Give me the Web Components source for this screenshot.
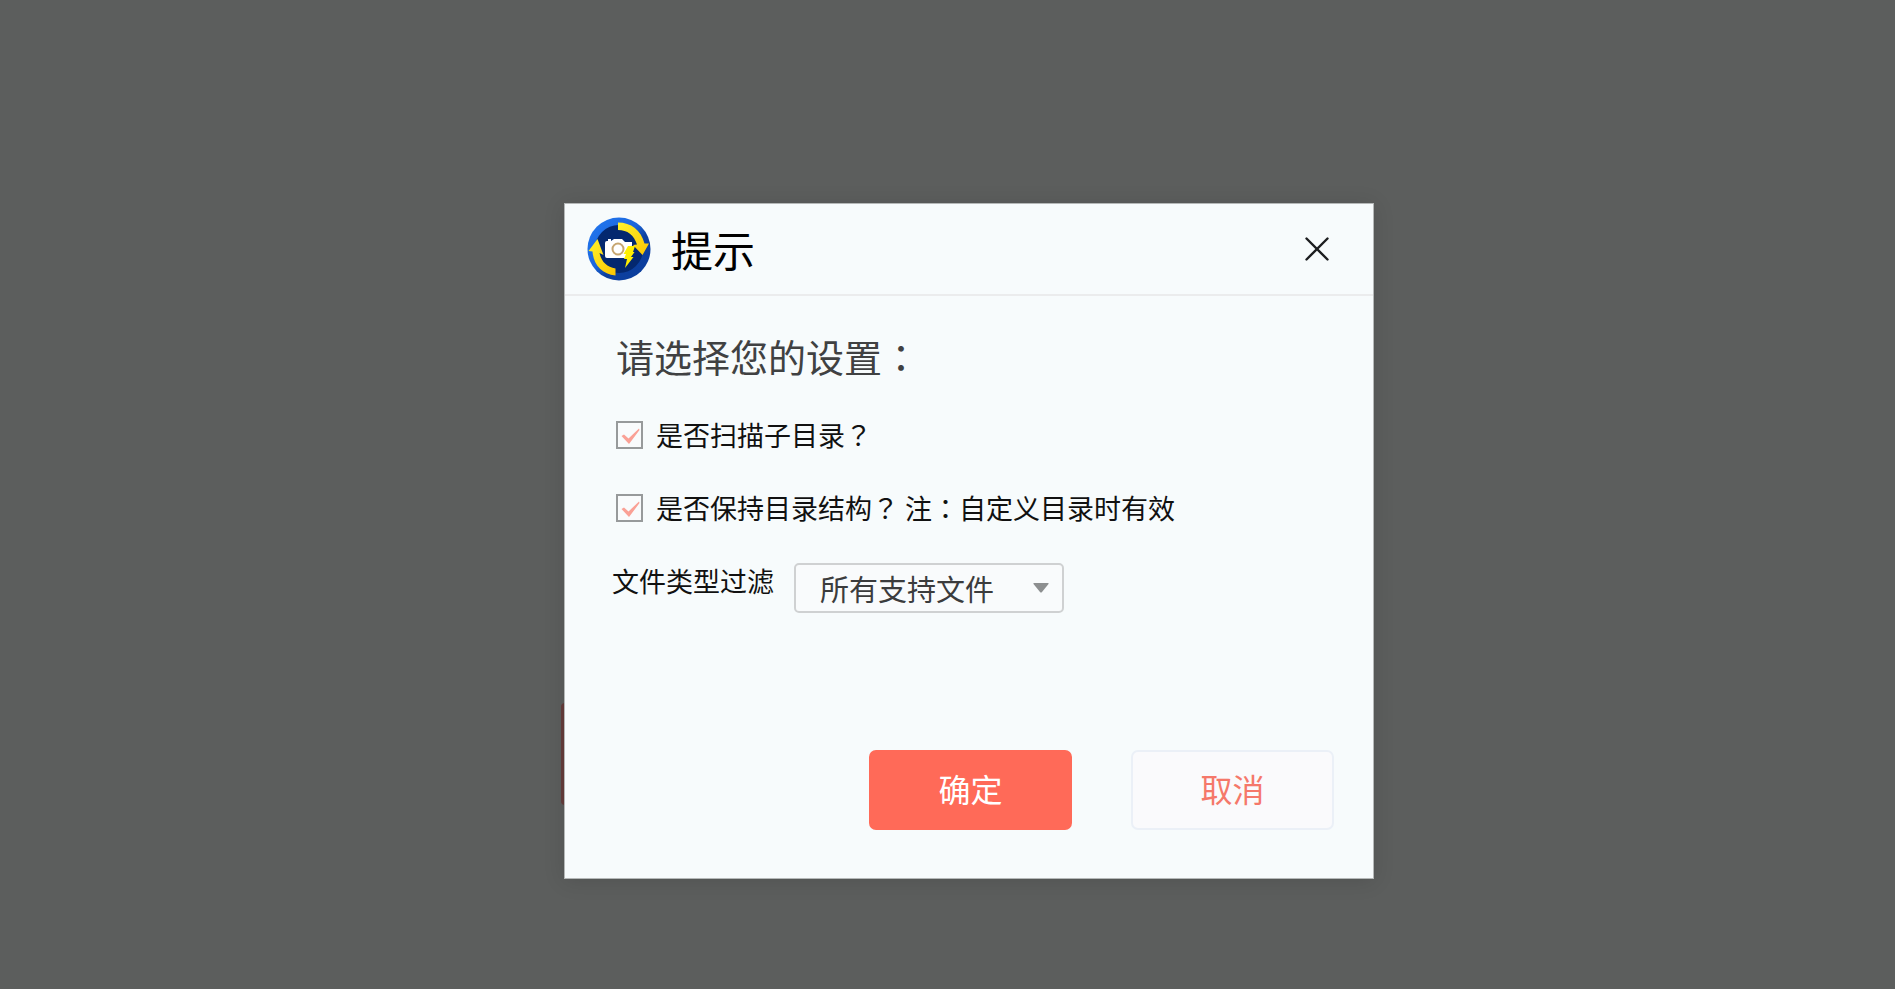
<!DOCTYPE html>
<html lang="zh-CN">
<head>
<meta charset="utf-8">
<title>提示</title>
<style>
  body {
    margin: 0;
    background: #5c5e5d;
    font-family: "Noto Sans CJK SC", sans-serif;
  }
</style>
</head>
<body>

<prompt-backdrop>
  <prompt-dialog>
    <app-logo slot="logo"></app-logo>
    <span slot="title">提示</span>
    <settings-form></settings-form>
  </prompt-dialog>
</prompt-backdrop>

<template id="prompt-backdrop">
  <style>
    :host {
      display: flex;
      justify-content: center;
      align-items: flex-start;
      box-sizing: border-box;
      min-height: 100vh;
      padding: 203px 0 40px 43px;
    }
    .stage {
      position: relative;
      width: 43%;
      min-width: 810px;
    }
    /* Edge of the button that the dialog covers. */
    .covered {
      position: absolute;
      left: -3px;
      bottom: 74px;
      width: 12px;
      height: 102px;
      border-radius: 4px;
      background: #653d3b;
    }
  </style>
  <div class="stage">
    <div class="covered"></div>
    <slot></slot>
  </div>
</template>

<template id="prompt-dialog">
  <style>
    :host {
      display: block;
      position: relative;
      box-sizing: border-box;
      border: 1px solid #b5b8b8;
      background: #f7fbfc;
      box-shadow: 0 2px 20px rgba(0, 0, 0, .12);
    }
    header {
      display: flex;
      align-items: center;
      gap: 20px;
      box-sizing: border-box;
      height: 92px;
      padding: 0 40px 0 22px;
      border-bottom: 2px solid #ebeced;
    }
    h1 {
      flex: 1;
      margin: 0;
      color: #000;
      font-size: 42px;
      font-weight: 400;
      line-height: 56px;
    }
    button {
      display: flex;
      padding: 4px;
      border: 0;
      background: none;
      cursor: pointer;
    }
  </style>
  <header>
    <slot name="logo"></slot>
    <h1><slot name="title"></slot></h1>
    <button type="button" aria-label="关闭">
      <svg width="24" height="24" viewBox="0 0 24 24" fill="none" stroke="#1c1e20" stroke-width="2.4" stroke-linecap="round">
        <path d="M1.5 1.5l21 21M22.5 1.5l-21 21"/>
      </svg>
    </button>
  </header>
  <slot></slot>
</template>

<template id="app-logo">
  <style>
    :host {
      display: block;
      width: 64px;
      height: 64px;
    }
    svg {
      display: block;
    }
  </style>
  <svg width="64" height="64" viewBox="0 0 64 64" aria-hidden="true">
    <defs>
      <linearGradient id="disc" x1="0" y1="0" x2="1" y2="1">
        <stop offset="0" stop-color="#2379f3"/>
        <stop offset=".45" stop-color="#1b66db"/>
        <stop offset=".6" stop-color="#0d409f"/>
        <stop offset="1" stop-color="#0a3d9d"/>
      </linearGradient>
      <linearGradient id="gold" x1="0" y1="0" x2="1" y2="1">
        <stop offset="0" stop-color="#fff32a"/>
        <stop offset="1" stop-color="#fbc503"/>
      </linearGradient>
    </defs>
    <circle cx="32" cy="32" r="31.5" fill="url(#disc)"/>
    <circle cx="32" cy="32" r="24" fill="#04286f"/>
    <path d="M31 5.500C44 5.500 54 13 57.500 26.500L62 26.500L55.500 38L46 28L50 27.500C47 18 40.500 13 31 13Z" fill="url(#gold)"/>
    <path d="M28.500 58.500C15 57 6.500 48 5.500 34.500L1.500 34L10.500 22L16.500 38L12.500 36C14.500 45 20 50 28.500 51.500Z" fill="url(#gold)"/>
    <path d="M20 24h1v-2h3v2l3-2h8l3 3h7v3l-2 13H20q-2 0-2-2V26q0-2 2-2z" fill="#fff"/>
    <circle cx="31" cy="32" r="5.500" fill="#fff" stroke="#c6a570" stroke-width="2"/>
    <path d="M41 29h7l-2 6h1.500L44 40h2.500L38 51l2-9h-3l2-5h-2.500z" fill="#fff000"/>
  </svg>
</template>

<template id="check-option">
  <style>
    :host {
      display: block;
    }
    label {
      display: flex;
      align-items: center;
      gap: 13px;
      color: #111;
      font-size: 27px;
      line-height: 36px;
    }
    .box {
      display: grid;
      width: 27px;
      height: 28px;
    }
    input,
    svg {
      grid-area: 1 / 1;
      width: 100%;
      height: 100%;
    }
    input {
      appearance: none;
      box-sizing: border-box;
      margin: 0;
      border: 2px solid #979a9b;
      background: #f9fbfc;
    }
    svg {
      visibility: hidden;
      pointer-events: none;
    }
    input:checked + svg {
      visibility: visible;
    }
  </style>
  <label>
    <span class="box">
      <input type="checkbox">
      <svg viewBox="0 0 27 28" fill="#faa196">
        <path d="M5.500 15l2.500-1.500 4.500 4L23 7.500l.5 1.500L13 23z"/>
      </svg>
    </span>
    <span><slot></slot></span>
  </label>
</template>

<template id="settings-form">
  <style>
    :host {
      display: block;
    }
    form {
      display: flex;
      flex-direction: column;
      gap: 37px;
      padding: 36px 39px 48px 51px;
    }
    h2 {
      margin: 0;
      color: #404142;
      font-size: 38px;
      font-weight: 400;
      line-height: 48px;
    }
    /* Punctuation that sits in the middle of its em box. */
    .mid {
      font-family: "Noto Sans CJK TC", sans-serif;
    }
    .filter {
      display: flex;
      align-items: flex-start;
      gap: 20px;
      margin-left: -4px;
    }
    .filter label {
      color: #111;
      font-size: 27px;
      line-height: 36px;
    }
    .select {
      display: grid;
      width: 270px;
    }
    select,
    .caret {
      grid-area: 1 / 1;
    }
    select {
      appearance: none;
      box-sizing: border-box;
      height: 50px;
      padding: 0 48px 0 24px;
      border: 2px solid #cfd1d2;
      border-radius: 5px;
      background: #f9fbfc;
      color: #3b3c3d;
      font: inherit;
      font-size: 29px;
      line-height: 44px;
    }
    .caret {
      place-self: center end;
      margin-right: 15px;
      pointer-events: none;
    }
    .actions {
      display: flex;
      justify-content: flex-end;
      gap: 59px;
      margin-top: 100px;
    }
    button {
      box-sizing: border-box;
      width: 203px;
      height: 80px;
      padding: 0 0 4px;
      border: 2px solid #ff6a58;
      border-radius: 7px;
      background: #ff6a58;
      color: #fff;
      font: inherit;
      font-size: 32px;
      cursor: pointer;
    }
    button.plain {
      border-color: #ebf0f7;
      background: #fafafc;
      color: #f5786a;
    }
  </style>
  <form>
    <h2>请选择您的设置<span class="mid" lang="zh-TW">：</span></h2>
    <check-option checked>是否扫描子目录<span class="mid" lang="zh-TW">？</span></check-option>
    <check-option checked>是否保持目录结构<span class="mid" lang="zh-TW">？</span> 注<span class="mid" lang="zh-TW">：</span>自定义目录时有效</check-option>
    <div class="filter">
      <label for="type">文件类型过滤</label>
      <div class="select">
        <select id="type">
          <option>所有支持文件</option>
        </select>
        <svg class="caret" width="16" height="10" viewBox="0 0 16 10" fill="#8d8f90">
          <path d="M1 0h14q1 0 .5 1L9 9q-1 1-2 0L.5 1Q0 0 1 0z"/>
        </svg>
      </div>
    </div>
    <div class="actions">
      <button type="submit">确定</button>
      <button type="button" class="plain">取消</button>
    </div>
  </form>
</template>

<script>
/**
 * Base for the elements of the page: stamps the template that has the
 * same name as the element's tag.
 */
class TemplateElement extends HTMLElement {
  constructor() {
    super();

    const template = document.getElementById(this.localName);
    this.attachShadow({mode: 'open'});
    this.shadowRoot.appendChild(template.content.cloneNode(true));
  }
}

/**
 * `<check-option>` is a tick box with its label.
 */
class CheckOption extends TemplateElement {
  static get observedAttributes() {
    return ['checked'];
  }

  attributeChangedCallback(name, oldValue, newValue) {
    this.shadowRoot.querySelector('input').checked = newValue !== null;
  }
}

/**
 * `<prompt-dialog>` is a titled window with a close button.
 *
 * @fires close
 */
class PromptDialog extends TemplateElement {
  connectedCallback() {
    this.setAttribute('role', 'dialog');
    this.shadowRoot.querySelector('button').addEventListener('click', () => {
      this.style.display = 'none';
      this.dispatchEvent(new CustomEvent('close', {bubbles: true}));
    });
  }
}

/**
 * `<settings-form>` holds the scan settings.
 */
class SettingsForm extends TemplateElement {
  connectedCallback() {
    this.shadowRoot.querySelector('form').addEventListener('submit', (event) => {
      event.preventDefault();
    });
  }
}

// Define the elements.
window.customElements.define('app-logo', class extends TemplateElement {});
window.customElements.define('check-option', CheckOption);
window.customElements.define('settings-form', SettingsForm);
window.customElements.define('prompt-dialog', PromptDialog);
window.customElements.define('prompt-backdrop', class extends TemplateElement {});
</script>
</body>
</html>
